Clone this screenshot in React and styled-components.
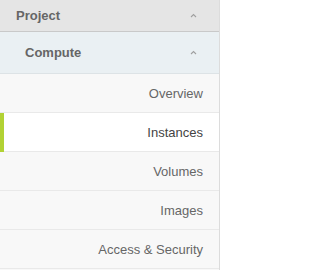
import React from 'react'
import styled, { createGlobalStyle } from 'styled-components'

const Global = createGlobalStyle`
  body {
    margin: 0;
    background: #fff;
    font-family: "Liberation Sans", Arial, sans-serif;
  }
`

const Nav = styled.nav`
  width: 220px;
  height: 270px;
  box-sizing: border-box;
  border-right: 1px solid #dcdcdc;
  background: #f8f8f8;
  overflow: hidden;
`

const Header = styled.div`
  display: flex;
  align-items: center;
  justify-content: space-between;
  box-sizing: border-box;
  height: ${p => p.$h}px;
  padding: 0 22px 0 ${p => p.$pl}px;
  background: ${p => p.$bg};
  border-bottom: 1px solid ${p => p.$line};
  color: #666;
  font-size: 13px;
  font-weight: bold;
`

const Caret = styled.svg`
  width: 7px;
  height: 5px;
`

const Item = styled.div`
  position: relative;
  display: flex;
  align-items: center;
  justify-content: flex-end;
  box-sizing: border-box;
  height: 39px;
  padding-right: 16px;
  background: ${p => (p.$active ? '#fff' : '#f8f8f8')};
  border-bottom: 1px solid #e9e9e9;
  color: ${p => (p.$active ? '#444' : '#666')};
  font-size: 13px;
  &::before {
    content: '';
    position: absolute;
    left: 0;
    top: 0;
    bottom: -1px;
    width: 4px;
    background: ${p => (p.$active ? '#b2d234' : 'transparent')};
  }
`

const Up = () => (
  <Caret viewBox="0 0 7 5">
    <polyline points="1,4 3.5,1.5 6,4" fill="none" stroke="#a0a0a0" strokeWidth="1.1" />
  </Caret>
)

const items = ['Overview', 'Instances', 'Volumes', 'Images', 'Access & Security']

export default function App() {
  return (
    <>
      <Global />
      <Nav>
        <Header $h={32} $pl={16} $bg="#e5e5e5" $line="#c9c9c9">
          <span>Project</span>
          <Up />
        </Header>
        <Header $h={42} $pl={25} $bg="#eaf0f3" $line="#dde3e6">
          <span>Compute</span>
          <Up />
        </Header>
        {items.map(t => (
          <Item key={t} $active={t === 'Instances'}>{t}</Item>
        ))}
      </Nav>
    </>
  )
}
